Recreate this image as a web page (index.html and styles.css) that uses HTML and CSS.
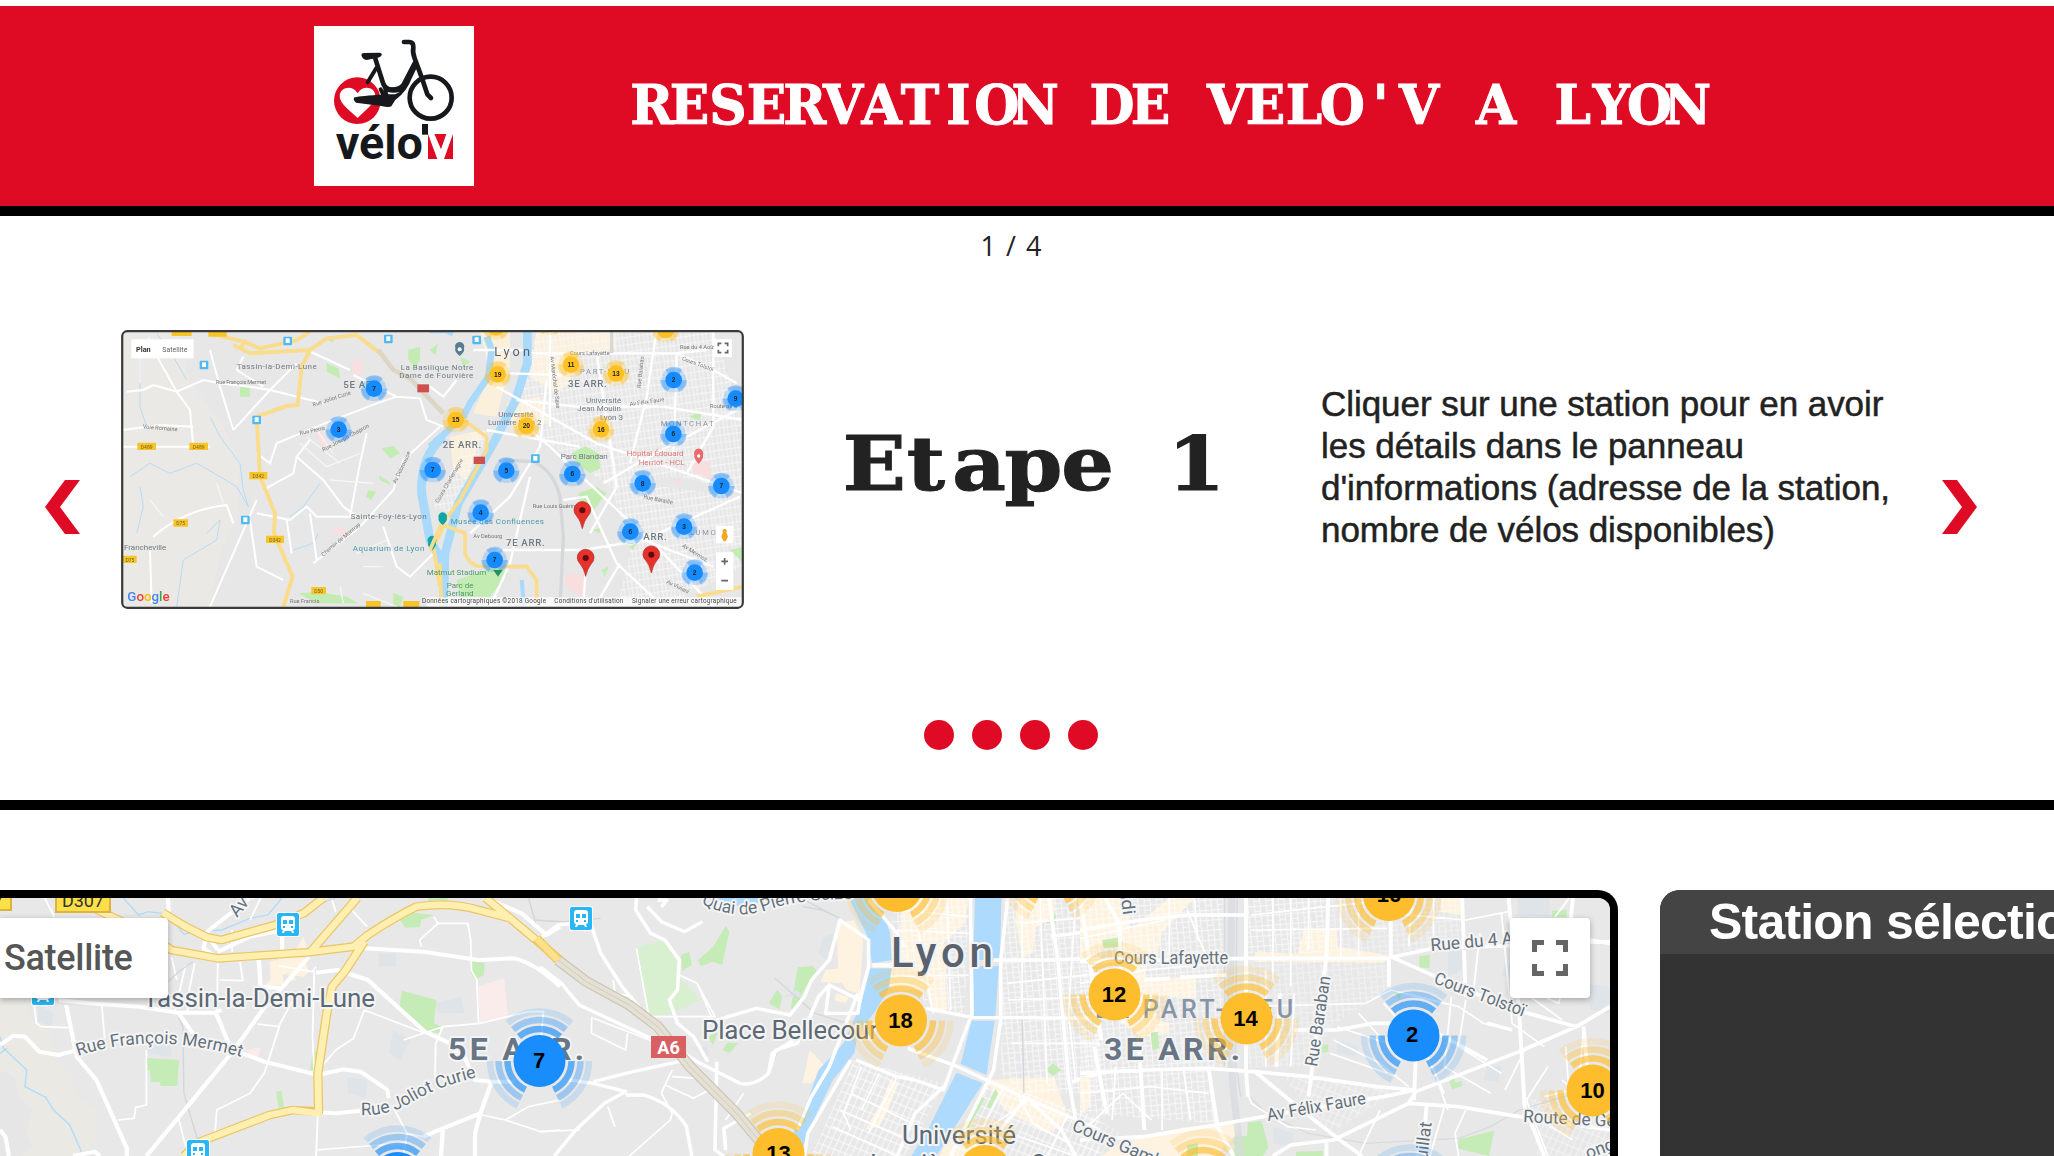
FILE: index.html
```html
<!DOCTYPE html>
<html lang="fr">
<head>
<meta charset="utf-8">
<title>Vélo'v Lyon</title>
<link rel="stylesheet" href="styles.css">
</head>
<body>
<svg class="defs" width="0" height="0" aria-hidden="true">
  <defs>
    <g id="cluster">
      <circle r="26" fill="currentColor"/>
      <g fill="none" stroke="currentColor" stroke-width="6.5">
        <circle r="32" pathLength="360" stroke-dasharray="64 52 64 50 80 50" opacity=".65"/>
        <circle r="41" pathLength="360" stroke-dasharray="64 52 64 50 80 50" opacity=".36"/>
        <circle r="49.5" pathLength="360" stroke-dasharray="64 52 64 50 80 50" opacity=".15"/>
      </g>
    </g>
    <g id="train">
      <rect x="-1" y="-1" width="24" height="25" rx="3" fill="#fff"/>
      <rect width="22" height="23" rx="2" fill="#29b6f6"/>
      <path fill="#fff" d="M7 3h8q3 0 3 3v9q0 2-2 2l1 3h-2l-1-2h-6l-1 2H5l1-3q-2 0-2-2V6q0-3 3-3z"/>
      <path fill="#29b6f6" d="M6 7h4v4H6zM12 7h4v4h-4zM6 13h2v2H6zM14 13h2v2h-2z"/>
    </g>
    <g id="glow">
      <circle r="37" fill="currentColor" opacity=".2"/>
      <circle r="27" fill="none" stroke="currentColor" stroke-width="26" pathLength="360" stroke-dasharray="64 52 64 50 80 50" opacity=".36"/>
      <circle r="25" fill="currentColor"/>
    </g>
    <g id="pin">
      <path fill="#e5312b" stroke="#b3201c" stroke-width="2" d="M0 52Q-5 28-17 14A25 25 0 1 1 17 14Q5 28 0 52z"/>
      <circle cy="-3" r="9" fill="#5d0a0a"/>
    </g>
    <g id="tiny-train">
      <rect x="-13" y="-13" width="26" height="26" rx="3" fill="#4fb9f5"/>
      <rect x="-6" y="-8" width="12" height="14" fill="#fff"/>
    </g>
    <pattern id="grid" width="34" height="30" patternUnits="userSpaceOnUse" patternTransform="rotate(-5)">
      <path d="M0 2H34M3 0V30M20 2V30M3 17H20" stroke="#fff" stroke-width="2" fill="none"/>
    </pattern>
    <pattern id="grid-slant" width="34" height="28" patternUnits="userSpaceOnUse" patternTransform="rotate(23)">
      <path d="M0 2H34M3 0V28M20 2V28" stroke="#fff" stroke-width="2.2" fill="none"/>
    </pattern>
    <pattern id="fine" width="25" height="22" patternUnits="userSpaceOnUse" patternTransform="rotate(-8)">
      <path d="M0 2H25M3 0V22M14 0V22" stroke="#f8f8f8" stroke-width="2.5" fill="none"/>
    </pattern>
    <filter id="soft"><feGaussianBlur stdDeviation=".75"/></filter>
    <clipPath id="thumb-clip"><rect x="122" y="331" width="621" height="277" rx="5"/></clipPath>
  </defs>
</svg>

<header class="banner">
  <svg class="logo" viewBox="42 78 480 480" role="img" aria-label="vélo'v">
    <rect x="42" y="78" width="480" height="480" fill="#fff"/>
    <circle cx="172" cy="302" r="70" fill="#df0b24"/>
    <path d="M173 354C150 332 118 310 119 287C121 261 157 253 173 280C189 253 225 261 226 287C226 310 194 332 173 354z" fill="#fff"/>
    <g fill="none" stroke="#17181c" stroke-linecap="round" stroke-linejoin="round">
      <circle cx="392" cy="293" r="63" stroke-width="14"/>
      <path stroke-width="14" d="M312 126H329Q341 127 340 142Q337 157 344 175L365 232Q375 262 382 283L393 294"/>
      <path stroke-width="14" d="M226 176L250 252Q256 266 272 269Q300 270 311 254L344 190"/>
      <path stroke-width="12" d="M229 204L203 247M242 268L249 282M284 294Q316 270 330 232L347 196"/>
    </g>
    <path fill="#17181c" d="M184 165Q184 159 192 159L238 158Q247 159 245 166Q242 171 234 173L200 180Q187 179 184 165zM163 292Q171 289 235 284L282 283Q290 286 284 303L274 319Q267 324 244 318L168 308Q158 300 163 292zM250 262L313 265L275 306L250 300z"/>
    <path fill="#fff" d="M263 276Q280 280 300 276L285 283H265z"/>
    <text x="107" y="476" class="logo-word" textLength="262" lengthAdjust="spacingAndGlyphs">vélo</text>
    <path fill="#17181c" d="M366 372H384V404H366z"/>
    <path fill="#df0b24" d="M384 402H459V477H384z"/>
    <path fill="#fff" d="M384 402H403L423 448L439 402H459L432 477H412z"/>
  </svg>
  <h1 class="title">
    <svg width="1076" height="60" viewBox="0 0 1076 60">
      <text class="slab title-text" transform="scale(.96 1)" y="49" x="20.5 60 100 140 180 220 260 300 340 380 420 460 500 540 580 620 660 700 740 780 820 860 900 940 980 1020 1060 1099.5">RESERVATION DE VELO'V A LYON</text>
    </svg>
  </h1>
</header>

<section class="slider">
  <p class="counter">1 / 4</p>
  <div class="slide">
    <svg class="arrow arrow-prev" viewBox="0 0 35 54"><path d="M20 0H35L15 27L35 54H20L0 27z"/></svg>
    <svg class="thumb" viewBox="120 329 626 282">
      <g clip-path="url(#thumb-clip)">
       <g filter="url(#soft)">
        <rect x="120" y="329" width="626" height="282" fill="#e7e7e7"/>
        <g transform="translate(110 320) scale(.33333)">
          <path fill="#ebe9e5" d="M30 30H200L240 190L330 300L390 420L380 590L330 700L300 860H30z"/>
          <g fill="#c3ecb2"><path d="M650 130L685 145L690 175L650 155zM895 90L930 80V120L915 145L895 120zM390 200H420V230H390zM815 385L850 378L870 400L840 415zM775 510L798 515L785 540L768 530zM565 820L620 815L710 830L745 850H620zM850 820L880 830L870 860H850zM650 60L675 52L670 66zM805 465L838 485L840 495L810 480z"/></g>
          <path fill="#f9dfdf" d="M728 125L758 120V160L728 165zM612 340L632 335L655 370L640 382zM680 615L712 635L705 650L668 635z"/>
          <g fill="none" stroke="#b5dcf5" stroke-width="3"><path d="M140 40L190 110L230 180M90 100V260L110 320M60 470L120 430L180 460L260 430L330 470L380 500L415 560M90 500L100 560L80 640M290 640L330 600L320 660L220 720L200 860M300 290L330 350L390 430L400 510L415 560M540 590L580 560L630 490M550 690L610 670L625 640"/></g>
          <g fill="none" stroke="#fff" stroke-width="6"><path d="M50 215L100 210L130 195L200 215L280 180L330 190L420 200L480 210L640 250M40 330L150 315L250 320M130 90L200 215L240 270L250 380M40 380H300M300 90L330 200L370 330M370 330L480 210L560 130M400 110L380 150L460 200M440 400L480 430L500 370L620 320L800 250L860 230L930 235L950 300L1000 320M560 410L640 480L700 560L740 590M460 510L550 460L560 410L600 360M130 650Q220 570 350 555L370 610M300 860L370 700L440 540M440 580L540 600L590 560L620 590H720M530 600L545 700M420 600L440 740L520 780M610 730L750 620L850 510L880 420L990 320M720 590L750 430L770 340M820 620L860 740L900 770L990 680M600 580L620 720M120 690L125 850M730 165L860 230M590 90L720 150"/></g>
          <path fill="none" stroke="#f6f6f6" stroke-width="4" d="M570 370L650 440L750 400M590 350L690 430M620 330L670 400M90 190V90L120 50M740 700L830 660M760 740H820M690 800L700 850M760 820L860 860M120 540L160 590M320 490L340 550M660 480L790 490"/>
          <g fill="none" stroke="#f9dc8c" stroke-width="12"><path d="M300 40L400 65L450 85L560 60L600 35M370 75L420 100L600 90L650 55L740 45L810 100M410 60L390 85M600 90L575 140L563 255L530 258L440 290L450 470L495 580L492 640L548 770L520 860"/></g>
          <path stroke="#ddd6c5" stroke-width="14" fill="none" d="M805 90L850 150L900 175L1000 280"/>
          <path fill="none" stroke="#a9d9fb" stroke-width="27" d="M1000 350Q930 410 935 520L960 660L1000 730"/>
          <path fill="none" stroke="#f9dc8c" stroke-width="12" d="M1000 620L970 680L990 800"/>
          <g fill="#f7c52b"><path d="M185 30H245V48H185zM295 30H350V50H295zM82 368H138V390H82zM238 368H294V390H238zM418 456H472V478H418zM190 598H234V620H190zM468 647H522V669H468zM38 707H80V729H38zM604 801H648V823H604zM768 843H812V865H768zM880 843H928V865H880z"/></g>
          <path fill="#cf5050" d="M922 193H957V217H922z"/>
          <use href="#tiny-train" x="533" y="63"/><use href="#tiny-train" x="282" y="135"/><use href="#tiny-train" x="440" y="300"/><use href="#tiny-train" x="406" y="600"/><use href="#tiny-train" x="835" y="57"/>
          <g class="t-label">
            <text x="380" y="148" textLength="240">Tassin-la-Demi-Lune</text>
            <text x="318" y="193" class="t-small" textLength="150">Rue François Mermet</text>
            <text x="98" y="325" class="t-small" transform="rotate(5 98 325)">Voie Romaine</text>
            <text x="610" y="260" class="t-small" transform="rotate(-18 610 260)">Rue Joliot Curie</text>
            <text x="570" y="345" class="t-small" transform="rotate(-12 570 345)">Rue Pierre</text>
            <text x="640" y="395" class="t-small" transform="rotate(-28 640 395)">Rue Joseph Chapron</text>
            <text x="722" y="596" textLength="228">Sainte-Foy-lès-Lyon</text>
            <text x="42" y="689">Francheville</text>
            <text x="728" y="692" fill="#479aa5" textLength="215">Aquarium de Lyon</text>
            <text x="700" y="203" class="t-arr">5E ARR.</text>
            <text x="640" y="710" class="t-small" transform="rotate(-40 640 710)">Chemin de Montray</text>
            <text x="858" y="492" class="t-small" transform="rotate(-65 858 492)">Av Debrousse</text>
            <text x="540" y="850" class="t-small">Rue Francis</text>
          </g>
          <g class="t-road"><text x="110" y="386">D489</text><text x="266" y="386">D489</text><text x="445" y="474">D342</text><text x="212" y="616">D75</text><text x="495" y="665">D342</text><text x="60" y="725">D75</text><text x="626" y="819">D50</text></g>
          <g color="#168bff"><use href="#glow" x="792" y="206"/><use href="#glow" x="686" y="329"/></g>
          <g class="t-num"><text x="792" y="213">7</text><text x="686" y="336">3</text></g>
          <rect x="64" y="58" width="187" height="57" fill="#fff"/>
          <text x="78" y="95" class="t-plan">Plan</text><text x="157" y="95" class="t-sat">Satellite</text>
          <g class="t-google"><text x="52" y="844"><tspan fill="#4285f4">G</tspan><tspan fill="#ea4335">o</tspan><tspan fill="#fbbc05">o</tspan><tspan fill="#4285f4">g</tspan><tspan fill="#34a853">l</tspan><tspan fill="#ea4335">e</tspan></text></g>
          <path fill="#0aa5a5" d="M966 692Q950 675 955 668A13 13 0 1 1 977 668Q982 675 966 692z"/>
        </g>
        <g transform="translate(430 320) scale(.33333)">
          <path fill="#fbf0db" d="M150 30H240V140L200 290L130 280L180 160zM320 30H560V90L440 100L420 190L380 220L300 170zM60 350L160 330L110 480L70 450zM230 250L330 230L360 300L250 330z"/>
          <path fill="url(#fine)" d="M320 30H850L940 300V520L750 470L540 500L300 330L260 300z"/>
          <path fill="url(#fine)" d="M540 480L940 530V740L700 860H560L600 700zM120 340L180 330L70 580L10 560z"/>
          <g fill="#c3ecb2"><path d="M90 110L120 125L100 140zM0 90L25 70L15 105zM425 400L465 378L505 400L512 445L480 460L440 430zM445 520L500 500L530 520L490 572L450 550zM80 780L200 740L235 760L180 830H90zM775 290L815 275L810 302zM900 690L940 680V730zM595 680L620 670L610 690zM485 630L510 625V640zM515 750L535 740L525 770z"/></g>
          <path fill="#f8dede" d="M405 762H462V830L405 800zM785 430L840 425L845 480L790 455zM730 480L755 475L750 500z"/>
          <g fill="none" stroke="#a9d9fb"><path stroke-width="26" d="M292 30V130L255 245L190 370L85 550L45 700L40 860"/><path stroke-width="20" d="M170 50L185 90L175 170L120 250L100 290L0 380M0 30H50L70 40"/><path stroke-width="12" d="M275 780L282 860"/></g>
          <g fill="none" stroke="#fff" stroke-width="7"><path d="M305 100H740L850 150L920 190M240 160L400 165M200 200L500 370L770 460L940 520M170 330L450 380M300 330L360 380L700 700L850 860M400 540L470 530L560 730L700 860M120 640L240 530L330 380L350 180M300 470L240 730L180 860M200 690H460L640 660L930 530M740 100L735 280L730 400M520 490L640 420L940 260M360 30V320M500 100L560 500L480 640M850 30V320L770 460M680 30L650 230L600 430M470 700L460 860M570 730L500 850M130 90H280M260 240L440 260L700 260L940 300M640 660L850 740M0 200L40 230L80 180M740 100L830 90"/></g>
          <g fill="none" stroke="#d5d7da" stroke-width="10"><path d="M220 420L310 425Q370 450 390 530L400 650L390 860M545 30V100"/></g>
          <g fill="none" stroke="#f9dc8c" stroke-width="11"><path d="M170 350V390L90 540L30 620L0 690M30 610L105 640V700Q120 740 160 740H290L320 780V850M30 730L35 860M100 300L170 350M800 830L940 800"/></g>
          <path fill="#cf5050" d="M131 410H165V432H131z"/>
          <use href="#tiny-train" x="140" y="60"/><use href="#tiny-train" x="316" y="416"/>
          <g class="t-label">
            <text x="193" y="107" class="t-city" textLength="107">Lyon</text>
            <text x="-88" y="150" textLength="218">La Basilique Notre</text><text x="-92" y="174" textLength="222">Dame de Fourvière</text>
            <text x="205" y="290">Université</text><text x="174" y="316">Lumière Lyon 2</text>
            <text x="468" y="248">Université</text><text x="442" y="273">Jean Moulin</text><text x="510" y="299">Lyon 3</text>
            <text x="450" y="162" class="t-wide">PART-DIEU</text>
            <text x="414" y="202" class="t-arr">3E ARR.</text><text x="38" y="383" class="t-arr">2E ARR.</text><text x="228" y="679" class="t-arr">7E ARR.</text><text x="640" y="660" class="t-arr">ARR.</text>
            <text x="692" y="319" class="t-wide">MONTCHAT</text>
            <text x="392" y="417">Parc Blandan</text>
            <text x="590" y="409" fill="#df7777">Hôpital Édouard</text><text x="626" y="436" fill="#df7777">Herriot - HCL</text>
            <text x="62" y="612" fill="#479aa5" textLength="280">Musée des Confluences</text>
            <text x="-10" y="764" fill="#4d9a6c">Matmut Stadium</text>
            <text x="50" y="803" fill="#4d9a6c">Parc de</text><text x="48" y="828" fill="#4d9a6c">Gerland</text>
            <text x="420" y="104" class="t-small">Cours Lafayette</text><text x="600" y="258" class="t-small" transform="rotate(-8 600 258)">Av Félix Faure</text>
            <text x="308" y="564" class="t-small">Rue Louis Guérin</text><text x="640" y="535" class="t-small" transform="rotate(12 640 535)">Rue Bataille</text>
            <text x="130" y="655" class="t-small">Av Debourg</text><text x="750" y="88" class="t-small">Rue du 4 Août</text><text x="755" y="120" class="t-small" transform="rotate(20 755 120)">Cours Tolstoï</text>
            <text x="780" y="645" class="t-wide">LUMO2</text><text x="632" y="205" class="t-small" transform="rotate(-84 632 205)">Rue Baraban</text>
            <text x="360" y="110" class="t-small" transform="rotate(83 360 110)">Av Maréchal de Saxe</text>
            <text x="25" y="550" class="t-small" transform="rotate(-60 25 550)">Cours Charlemagne</text>
            <text x="755" y="680" class="t-small" transform="rotate(32 755 680)">Av Mermoz</text><text x="840" y="264" class="t-small">Route de G</text>
            <text x="708" y="790" class="t-small" transform="rotate(25 708 790)">Av Viviani</text>
          </g>
          <path fill="#fff" opacity=".7" d="M-10 832H940V862H-10z"/>
          <g class="t-legal"><text x="-24" y="850" textLength="372">Données cartographiques ©2018 Google</text><text x="373" y="850" textLength="207">Conditions d'utilisation</text><text x="606" y="850" textLength="314">Signaler une erreur cartographique</text></g>
          <g color="#ffc021"><use href="#glow" x="198" y="22"/><use href="#glow" x="203" y="163"/><use href="#glow" x="423" y="134"/><use href="#glow" x="558" y="160"/><use href="#glow" x="77" y="300"/><use href="#glow" x="289" y="318"/><use href="#glow" x="513" y="328"/><use href="#glow" x="707" y="30"/><use href="#glow" x="358" y="8"/></g>
          <g color="#168bff"><use href="#glow" x="731" y="180"/><use href="#glow" x="917" y="236"/><use href="#glow" x="730" y="342"/><use href="#glow" x="8" y="450"/><use href="#glow" x="229" y="452"/><use href="#glow" x="427" y="462"/><use href="#glow" x="638" y="490"/><use href="#glow" x="874" y="498"/><use href="#glow" x="152" y="578"/><use href="#glow" x="601" y="635"/><use href="#glow" x="762" y="620"/><use href="#glow" x="194" y="720"/><use href="#glow" x="794" y="758"/></g>
          <g class="t-num"><text x="203" y="170">19</text><text x="423" y="141">11</text><text x="558" y="167">13</text><text x="77" y="307">15</text><text x="289" y="325">20</text><text x="513" y="335">16</text><text x="731" y="187">2</text><text x="917" y="243">9</text><text x="730" y="349">6</text><text x="8" y="457">7</text><text x="229" y="459">5</text><text x="427" y="469">6</text><text x="638" y="497">8</text><text x="874" y="505">7</text><text x="152" y="585">4</text><text x="601" y="642">6</text><text x="762" y="627">3</text><text x="194" y="727">7</text><text x="794" y="765">2</text></g>
          <use href="#pin" x="457" y="574"/><use href="#pin" x="467" y="717"/><use href="#pin" x="664" y="707"/>
          <path fill="#ea6a6a" d="M806 432Q790 415 793 405A14 14 0 1 1 819 405Q822 415 806 432z"/><circle cx="806" cy="408" r="5" fill="#fff"/>
          <path fill="#567d91" d="M89 108Q72 95 76 85A14 14 0 1 1 102 85Q106 95 89 108z"/><circle cx="89" cy="88" r="6" fill="#fff"/>
          <path fill="#0aa5a5" d="M38 615Q22 602 26 595A13 13 0 1 1 50 595Q54 602 38 615z"/><path fill="#23935b" d="M190 750H218L204 770z"/>
          <path fill="#fff" d="M852 58H906V111H852zM858 617H910V670H858zM858 697H910V810H858z"/>
          <path fill="none" stroke="#666" stroke-width="5" d="M865 79V70H874M884 70H893V79M893 89V98H884M874 98H865V89M874 724H894M884 714V734M874 782H894"/>
          <path fill="#f2a623" d="M884 627A6 6 0 0 1 889 637L894 650L887 664H881L874 650L879 637A6 6 0 0 1 884 627z"/>
        </g>
       </g>
      </g>
      <rect x="122.2" y="331.2" width="620.6" height="276.6" rx="5" fill="none" stroke="#3a3a3a" stroke-width="2.2"/>
    </svg>
    <h2 class="step">
      <svg width="384" height="90" viewBox="0 0 384 90">
        <text class="slab step-text" transform="scale(1.12 1)" y="67" x="28 74 121.5 170 218.5 267 315.5">Etape 1</text>
      </svg>
    </h2>
    <p class="desc">Cliquer sur une station pour en avoir<br>les détails dans le panneau<br>d'informations (adresse de la station,<br>nombre de vélos disponibles)</p>
    <svg class="arrow arrow-next" viewBox="0 0 35 54"><path d="M0 0H15L35 27L15 54H0L20 27z"/></svg>
  </div>
  <div class="dots"><span class="dot"></span><span class="dot"></span><span class="dot"></span><span class="dot"></span></div>
</section>

<main class="station-area">
  <div class="map">
    <svg class="map-canvas" viewBox="0 898 1610 258">
      <rect y="898" width="1610" height="258" fill="#e8e8e8"/>
      <!-- west: Tassin -->
      <g transform="translate(0 880) scale(.35714 .33333)">
        <path fill="#ebe9e4" d="M0 350L60 360L90 420L140 440L150 520L200 590L210 640L270 690L265 790L230 828H0z"/>
        <path fill="#e6e6e6" d="M0 570L40 590L55 650L90 690L75 760L90 800L60 828H0z"/>
        <path fill="#dfe4e9" d="M105 375L150 400L145 440L105 425zM410 490H480V530L410 520zM1060 220H1110V260H1060zM970 590L1030 600L1025 655L975 640zM1220 370L1290 350L1300 400H1225zM1100 450L1150 480L1120 540L1090 520z"/>
        <path fill="#c5ebb6" d="M1115 110L1160 98L1215 105L1180 120L1175 142L1135 143zM1198 50H1253V62L1200 62zM1125 332L1222 360L1215 430L1235 440L1230 460L1190 452L1118 390zM1320 245L1357 248L1355 285L1330 298L1320 280zM409 534L502 540L496 618H450L447 605L423 606L420 572L410 570zM773 635L788 632L795 680L780 684zM876 517L886 515L882 570L868 570z"/>
        <path fill="#fbecec" d="M1337 320L1412 295L1422 410L1345 426zM690 510L728 502L726 525L708 540z"/>
        <path fill="#fdf3e0" d="M757 243L780 240L782 210L825 215L850 170L860 210L850 230L865 275L850 290L820 285L830 300L808 303V280L790 285L795 315L740 318L757 300z"/>
        <g fill="none" stroke="#afdcfb" stroke-width="4"><path d="M345 54L388 105L415 95L470 103L515 163L545 155L620 150L700 115L750 105L790 54M0 470L10 505L75 570L70 620L128 652L150 690L195 735L228 815M0 520L20 505"/></g>
        <g fill="none" stroke="#fff" stroke-width="5" stroke-linejoin="round"><path d="M125 54L152 110M185 54L240 80M95 370L102 430L115 440L190 443M285 375L293 475M410 510V675L380 682L375 715L330 720M500 715L520 800M720 432L782 440L740 580L700 640L607 690L602 760M820 360L780 440M615 300L680 302L672 245M610 248L607 400M520 255L510 300L490 390M545 250L530 330L525 395M720 235L730 330M480 230L495 300M780 257L875 275L885 260M880 275L875 470L880 580M830 120L720 140M650 150V215M790 150V200M700 120L730 54M930 60L940 95M985 90L1028 140M1215 110L1226 130L1175 180L1180 200M1226 130H1310L1318 180L1320 270L1335 300L1340 430M1130 480L1240 440L1345 430L1480 395H1522L1515 470M1240 440L1220 490L1218 590M1020 390L1190 460M1020 390L990 475L940 510L900 560M890 700L885 828M885 810L1030 798L1130 790M1100 680L1140 760L1185 770M1140 760L1130 820M1350 705L1415 720L1515 755L1568 750M1415 720L1480 680L1568 660"/></g>
        <path fill="none" stroke="#d4d7da" stroke-width="4" d="M470 305L500 275L540 245M495 400L512 440L515 640L552 775M835 95L940 54M1480 54L1500 130M1500 120L1568 125"/>
        <g fill="none" stroke="#fff" stroke-width="12" stroke-linejoin="round"><path d="M470 54L473 95M700 54L580 155L570 205L610 235M165 360L250 370L390 380L500 398H600L620 390M185 375L215 530L270 600L355 805V828M500 400L540 460M605 400L640 490M0 495L38 467L70 470L110 515L165 525L210 512M0 750L15 770L25 828M205 828L265 815L280 828M410 828L500 712L655 510L735 390L865 230M655 510L740 545L890 585L960 568L1010 575L1085 630L1088 655M890 697L940 700L1010 692M885 278L945 270L1030 300L1190 455L1260 490M1020 205L1185 215L1340 240L1440 235Q1500 250 1568 320M1260 500L1300 530L1330 600L1375 605H1440M1375 610L1345 700L1240 745L1185 770M1345 700L1330 760V828M1240 745L1235 828M610 215L700 170L790 150V210M1360 54L1460 100L1530 165L1568 140M725 240L730 330M735 320L790 325M580 165L610 210"/></g>
        <g fill="none" stroke="#edc564" stroke-width="26" stroke-linejoin="round"><path d="M270 88L420 165L480 210L610 235L860 217L990 200L1030 165Q1100 115 1165 80Q1260 65 1340 90L1430 115M455 98L520 140L580 172L620 180L770 135L850 100L905 54M1000 54L870 215M1020 185L965 275L930 320L915 400L890 580L892 695L820 690L755 705L560 785L515 828M1360 54L1568 240"/></g>
        <g fill="none" stroke="#fff0b1" stroke-width="19" stroke-linejoin="round"><path d="M270 88L420 165L480 210L610 235L860 217L990 200L1030 165Q1100 115 1165 80Q1260 65 1340 90L1430 115M455 98L520 140L580 172L620 180L770 135L850 100L905 54M1000 54L870 215M1020 185L965 275L930 320L915 400L890 580L892 700L820 690L755 705L560 785L515 828M1360 54L1568 240"/></g>
      </g>
      <!-- centre: rivers and peninsula -->
      <g transform="translate(540 880) scale(.35714 .33333)">
        <path fill="#d8f0cf" d="M265 205L340 180L395 235L388 290L450 360L380 395L305 414z"/>
        <path fill="#c5ebb6" d="M520 138L530 155L510 255L485 245L450 258L443 240L485 200zM395 225L418 215L425 255L398 272zM722 262L765 258L775 275L740 330L708 400L703 380zM640 370L665 328L678 350L670 388zM470 470L498 455L485 495zM525 488L555 490L530 520L512 510zM655 515L668 518L650 552zM1420 105L1445 102V128L1420 130z"/>
        <path fill="#fdf3e0" d="M830 130L880 120L905 180L895 340L860 330L845 310L785 305L800 270L835 265zM830 340L865 350L855 370L825 360zM1010 54H1200L1190 130L1130 190L1140 390L1100 400L1080 330L990 330L930 260L1010 250zM755 510L800 560L760 610H735zM980 600L1005 610L970 700L950 740L910 750L960 660zM1340 54H1440V110L1390 140L1380 220L1350 230L1330 120zM1250 600L1440 590L1480 720L1420 760L1300 690zM1150 750L1240 760V828H1120z"/>
        <path fill="url(#grid)" d="M1300 54H1570V640L1350 640L1290 580z"/>
        <path fill="url(#grid-slant)" d="M880 540L1130 610L1030 828H760zM1260 600L1568 710V828H1150z"/>
        <path fill="url(#grid)" d="M990 54H1200L1190 400L1080 390L1060 290H980z"/>
        <path fill="#dfe4e9" d="M790 175L830 155L800 240L780 220zM420 500H470V530zM680 350L720 330L735 350z"/>
        <g fill="#addafd"><path d="M480 54H670L600 70L545 78L510 72zM865 54H920L960 95L980 160L985 240L930 250L915 165zM925 265H985L975 330L935 400L890 460L880 520L820 600L775 700L745 800L705 770L750 660L780 570L850 490L900 370zM1218 54H1292L1288 240H1213zM1212 258H1285L1275 408H1210zM1208 422H1273L1250 585L1178 552zM1166 578L1240 610L1180 710L1110 828H1040L1090 740z"/></g>
        <path fill="#c5ebb6" d="M1230 645L1245 655L1200 745H1185zM1275 628L1283 640L1260 687L1252 680zM1435 550L1460 570L1435 588L1418 570z"/>
        <g fill="none" stroke="#fff" stroke-width="5" stroke-linejoin="round"><path d="M205 300L210 340L260 350M145 410L144 460L240 510L245 460M270 205L305 410L490 410L440 310L390 285M210 740L190 680M0 755L110 750M340 640L370 700L365 720L250 828M340 640L350 615L430 655L490 620M350 615L370 570M370 590L440 595M570 640L520 720M150 415L330 490M440 310L480 410M900 560L850 700L870 750M950 580L900 690M1000 590L920 760M870 640L1080 750M840 690L1050 790M820 740L1000 828M1300 620L1250 720L1210 828M1370 660L1260 740L1500 828M1480 700L1420 828M1340 650L1380 730L1480 790M1060 150L1100 400M1140 54L1150 390M1010 90L1200 110M1000 150L1200 160M990 290L1200 285M1400 54L1420 610M1350 54L1350 400M1500 54L1480 400L1500 600M1310 310L1568 280M1310 360L1568 350M1320 490H1568M1340 130L1568 110"/></g>
        <path fill="none" stroke="#d4d7da" stroke-width="4" d="M0 122L70 125L170 115M740 60L830 110M735 80L790 90L840 115M658 295L770 400L860 430M1350 410L1355 640"/>
        <g fill="none" stroke="#fff" stroke-width="10" stroke-linejoin="round"><path d="M0 175L50 135L140 125L170 220L230 320L300 410M270 54L268 90L310 160L350 180L390 240L385 330L362 360L385 430L430 470L470 545M300 80L340 125L405 155L455 125M330 60L355 60L340 80M480 425L605 385L700 405L740 350L760 300L810 240L840 120L920 180V260L895 360L810 315L780 350L760 400L720 490L660 510L640 580Q600 620 560 610L440 545L390 510M0 260L60 310L110 375L200 420L340 490M80 600L150 610L240 635L180 670L100 750L40 828M150 605L260 575L410 540M240 645H290Q370 670 410 740L425 828M495 545L490 810L515 828M590 700L515 745L520 810M640 580L650 520L710 480M930 255H1000M1270 240H1430L1568 235M1080 385L1210 412L1568 415M900 335L890 400L800 400L810 315M890 340L810 560L760 650L720 750M885 540L1000 590L1050 600L1130 630L1150 570L1210 400L1205 54M1030 505L1170 560L1360 655L1568 750M1310 54L1290 240V420L1270 570L1150 828M1425 54L1450 240L1480 600L1500 720M1430 170L1568 150M1360 655L1230 828M1490 605L1568 580M1000 160L1020 200M920 60L1000 160M1130 620L1050 700L1000 828M1360 650L1460 750L1500 828M870 540L750 760L740 828"/></g>
        <g fill="none" stroke-linejoin="round"><path stroke="#cbc5b5" stroke-width="32" d="M50 240L130 305L250 375L330 440L420 560L550 700L620 790"/><path stroke="#e4e0d4" stroke-width="25" d="M50 240L130 305L250 375L330 440L420 560L550 700L620 790"/><path stroke="#c9c3b2" stroke-width="2" d="M50 240L130 305L250 375L330 440L420 560L550 700L620 790"/><path stroke="#edc564" stroke-width="27" d="M-10 175L50 240"/><path stroke="#ffe08a" stroke-width="20" d="M-10 175L50 240"/></g>
      </g>
      <!-- east: Part-Dieu -->
      <g transform="translate(1080 880) scale(.35714 .33333)">
        <path fill="#fdf3e0" d="M0 54H140V150L250 54H320L210 180L180 290L325 295L325 355L210 350L215 420L250 430L245 460L170 470L120 430V180L0 240zM490 215L610 222L625 150L720 145L720 200L860 225L850 248L490 245zM1010 54H1065V105L1010 95zM200 200L230 150L215 240zM0 590H30V680L0 700zM120 780L300 740L440 730V760L380 828H60z"/>
        <path fill="#dfe4e9" d="M1225 54H1315V110L1225 105zM1030 170H1070V270L1030 290zM1190 250H1220V290H1180zM720 480L780 500L770 530L720 520zM540 740L600 760L590 800L540 790zM1410 310L1484 320V400L1430 390zM1140 555L1180 560L1170 605L1130 600z"/>
        <path fill="url(#grid)" d="M0 54H400V500L420 560H360L380 730L0 700zM470 54H690L680 220H470z"/>
        <path fill="url(#grid)" opacity=".6" d="M690 54H1070V200L880 225H690zM470 240H860L870 320L700 440L640 560H470z"/>
        <path fill="url(#grid-slant)" opacity=".6" d="M1260 650L1480 730V828H1280zM560 580L900 630L700 760zM0 690L120 760L60 828H0z"/>
        <g fill="#c5ebb6"><path d="M62 180L112 172L116 200L66 204zM198 458L218 455L222 505L203 510zM950 228L980 225L978 265L950 262zM875 330L900 335L895 360zM680 492L695 495V515L675 518zM1320 92L1363 90L1362 112L1322 110zM470 728L508 722L528 800L512 828H432V770L468 768zM1062 778L1160 752L1145 828L1055 805zM1035 605L1045 593L1052 608L1068 603L1072 617L1042 628zM605 815L680 813V828H605zM300 795L330 790V828H300z"/></g>
        <g fill="none" stroke="#d7dade"><path stroke-width="20" opacity=".7" d="M425 54L418 480L430 640L450 828"/><path stroke-width="4" d="M405 54V560M440 54L435 540L450 650M466 640L520 700L640 760L800 790L1060 775L1150 740L1230 690L1370 645L1484 640"/></g>
        <g fill="none" stroke="#fff" stroke-width="5" stroke-linejoin="round"><path d="M250 54V230M300 90L350 220M0 175L240 120M60 300L180 270L390 250M320 54L330 180M470 380L800 370L870 330L1060 380L1130 430L1210 450M540 54V300M590 54V320M640 54V210M480 105L860 60M480 150L860 145M870 100L1080 120L1200 95M730 54V240M780 54V230M930 54L920 200M990 54V180M560 340L550 560M600 340L590 560M520 270V560M720 440L860 490M710 480L840 550L920 620M700 520L860 580M1040 350L1020 560L1150 640M1080 360L1060 500L1180 580M1180 100L1210 430L1300 500M1120 160L1100 350M1260 350L1350 420M1300 350L1340 370L1350 330M1250 500L1190 630M1410 440L1400 580L1484 590M470 640L480 670L580 740L660 750M1080 690L1050 760L1060 828M840 690L780 828M1020 680L980 828M1260 700L1380 780M1310 560L1250 660L1310 828M1350 600L1450 700M1360 500L1370 650M1000 600L1030 690M850 370L960 500L1020 640M780 400L900 540M0 760L120 640L200 720M0 640L200 620L360 640M0 310L60 300M100 560L90 720M230 570V750M290 570L310 720M1370 54L1330 110M1300 650L1450 610"/></g>
        <g fill="none" stroke="#fff" stroke-width="11" stroke-linejoin="round"><path d="M0 150L170 120L300 105H465M70 54L110 130L120 430M465 54V570L470 650M0 245L460 235H860L990 205L1484 185M870 60V230L1060 320L1220 390L1390 440L1484 380M695 54L690 230L670 400L640 650M865 235V320M1200 54L1230 400L1245 680L1300 828M1390 440L1230 515L940 635L920 670L710 780L590 795L540 828M0 580L180 570L360 565L490 575L640 590L830 620L940 630M490 575L620 690L740 790L790 828M0 780L180 770L380 735L620 690L850 650L940 630M40 500L75 700M165 490L180 750M360 565L385 740L430 828M920 670L1060 680L1230 710L1484 750M600 450L720 450L820 430H950L1140 540M1380 54L1370 170L1484 190M1140 430L1210 450M940 540L935 660M560 340L550 560M1070 54L1080 350M690 790V828M970 680L960 828M1410 440L1420 560L1484 610M0 54L60 480M180 300L250 295M280 292L410 285"/></g>
      </g>

      <use href="#train" x="277" y="913"/><use href="#train" x="570" y="907"/><use href="#train" x="32" y="982"/><use href="#train" x="187" y="1140"/>
      <g fill="#fde047" stroke="#dcb340" stroke-width="2"><path d="M-10 885H11V910H-10zM56 885H110V912H56z"/></g>
      <text x="83" y="907" class="m-shield">D307</text><text x="-18" y="907" class="m-shield">D307</text>
      <rect x="651" y="1036" width="35" height="22" fill="#d86062"/>
      <text x="668.5" y="1053.5" class="m-motorway">A6</text>

      <defs>
        <path id="mermet" d="M78 1056Q160 1028 260 1063"/>
        <path id="joliot" d="M361 1115Q390 1116 412 1102Q440 1085 490 1074"/>
        <path id="quai" d="M701 903Q735 922 770 909Q810 896 880 900"/>
      </defs>
      <g class="m-street">
        <text><textPath href="#mermet">Rue François Mermet</textPath></text>
        <text><textPath href="#joliot">Rue Joliot Curie</textPath></text>
        <text><textPath href="#quai">Quai de Pierre Scize</textPath></text>
        <text transform="translate(237 918) rotate(-50)">Av d</text>
        <text x="1114" y="964" textLength="114" lengthAdjust="spacingAndGlyphs">Cours Lafayette</text>
        <text transform="translate(1114 840) rotate(83)" textLength="76" lengthAdjust="spacingAndGlyphs">Garibaldi</text>
        <text transform="translate(1317 1067) rotate(-81.5)" textLength="91" lengthAdjust="spacingAndGlyphs">Rue Baraban</text>
        <text transform="translate(1431 951) rotate(-5)" textLength="108" lengthAdjust="spacingAndGlyphs">Rue du 4 Août</text>
        <text transform="translate(1433 983) rotate(20.5)" textLength="96" lengthAdjust="spacingAndGlyphs">Cours Tolstoï</text>
        <text transform="translate(1268 1121) rotate(-10)" textLength="100" lengthAdjust="spacingAndGlyphs">Av Félix Faure</text>
        <text transform="translate(1523 1122) rotate(3)" textLength="120" lengthAdjust="spacingAndGlyphs">Route de Genas</text>
        <text transform="translate(1427 1160) rotate(-83)">uillat</text>
        <text transform="translate(1588 1159) rotate(-20)">ong</text>
        <text transform="translate(1071 1130) rotate(23)">Cours Gambetta</text>
      </g>
      <g class="m-place">
        <text x="143" y="1006.5" textLength="232">Tassin-la-Demi-Lune</text>
        <text x="702" y="1038.5" textLength="176">Place Bellecour</text>
        <text x="902" y="1143.5" textLength="114">Université</text>
        <text x="870" y="1173" textLength="176">Lumière Lyon 2</text>
      </g>
      <text x="891" y="967" class="m-city" textLength="102">Lyon</text>
      <text x="448" y="1060" class="m-district" textLength="136">5E ARR.</text>
      <text x="1104" y="1060" class="m-district" textLength="136">3E ARR.</text>
      <text x="1095" y="1018" class="m-quarter" textLength="198">LA PART-DIEU</text>

      <g color="#fdbd2c"><use href="#cluster" x="901" y="1020.5"/><use href="#cluster" x="897" y="886"/><use href="#cluster" x="1051" y="872"/><use href="#cluster" x="1114.5" y="994.5"/><use href="#cluster" x="1246.5" y="1018.5"/><use href="#cluster" x="1389" y="895"/><use href="#cluster" x="1592.5" y="1090.5"/><use href="#cluster" x="778.5" y="1154"/><use href="#cluster" x="985" y="1171"/><use href="#cluster" x="1203" y="1182"/></g>
      <g color="#198dfb"><use href="#cluster" x="539.5" y="1061"/><use href="#cluster" x="1413.5" y="1035.5"/><use href="#cluster" x="397.5" y="1178"/><use href="#cluster" x="1410" y="1197"/></g>
      <g class="m-count"><text x="900.5" y="1028">18</text><text x="1114" y="1002">12</text><text x="1245.5" y="1026">14</text><text x="1389" y="902">16</text><text x="1592.5" y="1098">10</text><text x="778.5" y="1161">13</text><text x="539" y="1068">7</text><text x="1412" y="1042">2</text></g>
    </svg>
    <div class="map-type">Satellite</div>
    <div class="map-full"><svg width="36" height="36" viewBox="0 0 36 36"><path d="M2.5 12V2.5H12M24 2.5H33.5V12M33.5 24V33.5H24M12 33.5H2.5V24" fill="none" stroke="#666" stroke-width="5"/></svg></div>
  </div>
  <aside class="panel"><h2 class="panel-title">Station sélectionnée</h2></aside>
</main>
</body>
</html>
```

FILE: styles.css
```css
* { box-sizing: border-box; }

body {
  margin: 0;
  padding-top: 6px;
  height: 1156px;
  overflow: hidden;
  background: #fff;
  color: #222;
  font-family: "Liberation Sans", Arial, sans-serif;
}

.defs { position: absolute; }

h1, h2, p { margin: 0; }

.slab {
  font-family: "DejaVu Serif", serif;
  font-weight: 700;
  text-anchor: middle;
}

/* Header */
.banner {
  display: flex;
  align-items: flex-start;
  height: 210px;
  padding: 20px 0 0 314px;
  background: #df0b24;
  border-bottom: 10px solid #000;
}

.logo { width: 160px; height: 160px; flex: none; }

.logo-word {
  font: 700 136px Roboto, sans-serif;
  fill: #17181c;
}

.title { margin: 49px 0 0 158px; }
.title svg, .step svg { display: block; overflow: visible; }
.title-text { font-size: 54px; fill: #fff; stroke: #fff; stroke-width: 1px; }

/* Slider */
.slider {
  height: 594px;
  padding-right: 32px;
  border-bottom: 10px solid #000;
}

.counter {
  padding-top: 14px;
  font: 27px/32px "Open Sans", sans-serif;
  word-spacing: 3px;
  text-align: center;
}

.slide {
  display: flex;
  align-items: flex-start;
  height: 392px;
  margin-top: 66px;
}

.arrow {
  width: 35px;
  height: 54px;
  margin-top: 152px;
  flex: none;
  fill: #df0b24;
}

.arrow-prev { margin-left: 45px; }
.thumb { width: 626px; height: 282px; margin: 1px 0 0 40px; flex: none; }
.step { margin: 95px 0 0 97px; flex: none; }
.step-text { font-size: 74px; fill: #222; stroke: #222; stroke-width: 1px; }

.desc {
  width: 601px;
  margin: 55px 0 0 94px;
  flex: none;
  font-size: 35px;
  line-height: 42px;
  letter-spacing: -.05px;
  white-space: nowrap;
  -webkit-text-stroke: .5px #222;
}

.arrow-next { margin-left: 20px; }

.dots {
  display: flex;
  justify-content: center;
  gap: 18px;
}

.dot {
  width: 30px;
  height: 30px;
  border-radius: 50%;
  background: #df0b24;
}

/* Map and details panel */
.station-area {
  display: flex;
  gap: 42px;
  padding-top: 80px;
}

.map {
  position: relative;
  width: 1618px;
  height: 266px;
  flex: none;
  overflow: hidden;
  border: 8px solid #000;
  border-left: 0;
  border-bottom: 0;
  border-radius: 0 20px 0 0;
  background: #e8e8e8;
}

.map-canvas { display: block; width: 1610px; height: 258px; }

.map-type, .map-full {
  position: absolute;
  top: 20px;
  height: 80px;
  background: #fff;
  box-shadow: 0 2px 6px rgba(0, 0, 0, .3);
}

.map-type {
  left: 0;
  width: 168px;
  padding-left: 4px;
  border-radius: 0 4px 4px 0;
  color: #565656;
  font: 500 36px/80px Roboto, sans-serif;
  letter-spacing: -.3px;
}

.map-full {
  left: 1510px;
  display: flex;
  align-items: center;
  justify-content: center;
  width: 80px;
  border-radius: 4px;
}

.panel {
  flex: 1;
  min-width: 0;
  height: 266px;
  overflow: hidden;
  border-radius: 20px 0 0 0;
  background: #333;
}

.panel-title {
  height: 64px;
  padding-left: 49px;
  background: #444;
  color: #fff;
  font-size: 50px;
  line-height: 64px;
  letter-spacing: -.8px;
  white-space: nowrap;
}

/* Map lettering */
.m-street, .m-place, .m-city, .m-district {
  font-family: Roboto, sans-serif;
  paint-order: stroke;
  stroke: #f4f4f4;
  stroke-width: 4px;
  stroke-linejoin: round;
}

.m-street { font-size: 17.5px; fill: #65717c; }
.m-place { font-size: 26px; fill: #5d6974; }
.m-city { font-size: 42px; font-weight: 500; fill: #59626d; }
.m-district { font-size: 32px; font-weight: 700; fill: #687585; }
.m-quarter { font: 500 25px Roboto, sans-serif; fill: #8794a8; }
.m-shield { font: 18px Roboto, sans-serif; fill: #333; text-anchor: middle; }
.m-motorway { font: 700 18px Roboto, sans-serif; fill: #fff; text-anchor: middle; }
.m-count { font: 700 22px "Liberation Sans", sans-serif; fill: #000; text-anchor: middle; }

/* Thumbnail lettering */
.t-label { font: 24px Roboto, sans-serif; fill: #6f7a84; }
.t-small { font-size: 17px; fill: #777; }
.t-arr { font-size: 29px; font-weight: 500; letter-spacing: 2px; }
.t-wide { font-size: 23px; letter-spacing: 5px; fill: #8a93a0; }
.t-city { font-size: 38px; fill: #59626d; }
.t-road { font: 15px Roboto, sans-serif; fill: #74601c; text-anchor: middle; }
.t-num { font: 700 20px "Liberation Sans", sans-serif; fill: #222; text-anchor: middle; }
.t-plan { font: 700 22px Roboto, sans-serif; fill: #333; }
.t-sat { font: 21px Roboto, sans-serif; fill: #666; }
.t-google { font: 500 40px Roboto, sans-serif; }
.t-legal { font: 19px Roboto, sans-serif; fill: #444; }
```
